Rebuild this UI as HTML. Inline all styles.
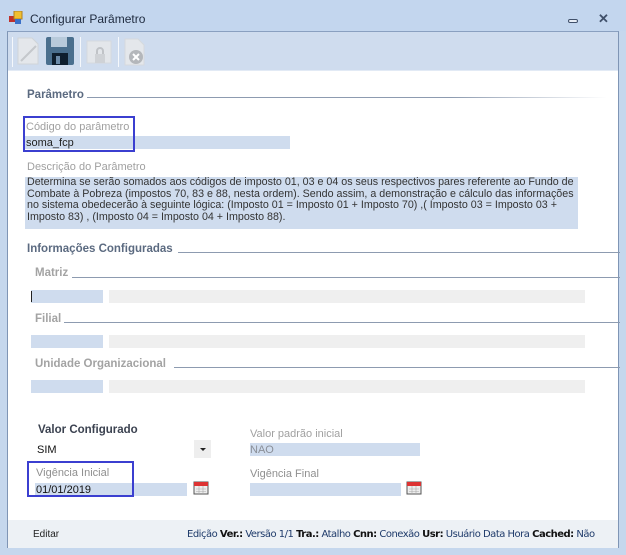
<!DOCTYPE html>
<html><head><meta charset="utf-8"><style>
*{margin:0;padding:0;box-sizing:border-box}
body{width:626px;height:555px;background:#c5d7ed;font-family:"Liberation Sans",sans-serif;font-size:11px;position:relative;overflow:hidden}
.a{position:absolute;white-space:nowrap}
.g{color:#a0a0a0}
.b{font-weight:bold;color:#5b6a80;font-size:11.5px}
.gb{font-weight:bold;color:#a3a3a3;font-size:11.5px}
.f{position:absolute;background:#cfdcee}
.e{position:absolute;background:#efefef}
.ln{position:absolute;height:1px;background:#8d9bb0}
</style></head><body>
<div class="a" style="left:0;top:0;width:626px;height:31px;background:#c3d6ee"></div>
<svg class="a" style="left:9px;top:11px" width="14" height="14"><rect x="0" y="5" width="6" height="6" fill="#c0302a"/><rect x="5" y="0" width="8" height="8" fill="#f0c030" stroke="#b08020"/><rect x="6" y="8" width="6" height="5" fill="#3a70c8"/></svg>
<div class="a" style="left:30px;top:12px;font-size:12px;color:#1e2a3e">Configurar Parâmetro</div>
<div class="a" style="left:568px;top:19px;width:10px;height:4px;border:1px solid #40506a;border-radius:2px;background:#e8eef6"></div>
<div class="a" style="left:598px;top:11px;font-size:13px;color:#40506a;font-weight:bold">✕</div>
<div class="a" style="left:7px;top:31px;width:612px;height:517px;background:#fff;border-left:1px solid #7f95b5;border-right:1px solid #7f95b5;border-top:1px solid #8aa0c0"></div>
<div class="a" style="left:8px;top:32px;width:610px;height:39px;background:#cfdcee;border-bottom:1px solid #e2eaf5"></div>
<div class="a" style="left:12px;top:37px;width:1px;height:30px;background:#f5f8fc"></div>
<div class="a" style="left:80px;top:37px;width:1px;height:30px;background:#f5f8fc"></div>
<div class="a" style="left:118px;top:37px;width:1px;height:30px;background:#f5f8fc"></div>
<svg class="a" style="left:16px;top:36px" width="24" height="30"><path d="M2 2h14l6 6v20H2z" fill="#e4e7eb" stroke="#d0d4d8"/><path d="M5 25L20 10" stroke="#c5c8cc" stroke-width="2"/></svg>
<svg class="a" style="left:45px;top:36px" width="30" height="30"><rect x="1" y="1" width="28" height="28" rx="2" fill="#4a6f8e"/><rect x="6" y="1" width="16" height="10" fill="#b8cadb"/><rect x="7" y="17" width="16" height="12" fill="#0e1e2e"/><rect x="11" y="20" width="4" height="8" fill="#6b8aa8"/></svg>
<svg class="a" style="left:86px;top:40px" width="26" height="26"><rect x="1" y="1" width="24" height="22" fill="#e3e6ea" stroke="#d6d9dd"/><path d="M11 14v-3a3 3 0 0 1 6 0v3" stroke="#c0c3c7" fill="none" stroke-width="2"/><rect x="9" y="14" width="10" height="9" fill="#cfd2d6"/></svg>
<svg class="a" style="left:123px;top:37px" width="24" height="30"><path d="M2 2h13l6 6v20H2z" fill="#e4e7eb" stroke="#d6d9dd"/><circle cx="13" cy="20" r="7" fill="#b4b7bb"/><path d="M10 17l6 6M16 17l-6 6" stroke="#fff" stroke-width="2"/></svg>

<div class="a b" style="left:27px;top:89px">Parâmetro</div>
<div class="ln" style="left:87px;top:97px;width:520px;background:linear-gradient(90deg,#8d9bb0,#8d9bb0 70%,#fff)"></div>
<div class="f" style="left:25px;top:136px;width:265px;height:13px"></div>
<div class="a g" style="left:26px;top:121px">Código do parâmetro</div>
<div class="a" style="left:26px;top:137px;color:#222">soma_fcp</div>
<div class="a" style="left:23px;top:116px;width:112px;height:36px;border:2px solid #3b3fd0"></div>
<div class="a g" style="left:27px;top:161px">Descrição do Parâmetro</div>
<div class="f" style="left:25px;top:177px;width:553px;height:52px"></div>
<div class="a" style="left:27px;top:177px;line-height:11.6px;color:#333;font-size:10.7px;white-space:normal;width:560px">Determina se serão somados aos códigos de imposto 01, 03 e 04 os seus respectivos pares referente ao Fundo de<br>Combate à Pobreza (impostos 70, 83 e 88, nesta ordem). Sendo assim, a demonstração e cálculo das informações<br>no sistema obedecerão à seguinte lógica: (Imposto 01 = Imposto 01 + Imposto 70) ,( Imposto 03 = Imposto 03 +<br>Imposto 83) , (Imposto 04 = Imposto 04 + Imposto 88).</div>

<div class="a b" style="left:27px;top:243px">Informações Configuradas</div>
<div class="ln" style="left:178px;top:252px;width:442px"></div>
<div class="a gb" style="left:35px;top:267px">Matriz</div>
<div class="ln" style="left:72px;top:277px;width:548px"></div>
<div class="f" style="left:31px;top:290px;width:72px;height:13px"></div>
<div class="a" style="left:31px;top:291px;width:1px;height:11px;background:#222"></div>
<div class="e" style="left:109px;top:290px;width:476px;height:13px"></div>
<div class="a gb" style="left:35px;top:313px">Filial</div>
<div class="ln" style="left:64px;top:322px;width:556px"></div>
<div class="f" style="left:31px;top:335px;width:72px;height:13px"></div>
<div class="e" style="left:109px;top:335px;width:476px;height:13px"></div>
<div class="a gb" style="left:35px;top:358px">Unidade Organizacional</div>
<div class="ln" style="left:174px;top:367px;width:446px"></div>
<div class="f" style="left:31px;top:380px;width:72px;height:13px"></div>
<div class="e" style="left:109px;top:380px;width:476px;height:13px"></div>

<div class="a" style="left:38px;top:424px;font-weight:bold;color:#3b4250;font-size:11.5px">Valor Configurado</div>
<div class="a" style="left:37px;top:444px;color:#111">SIM</div>
<div class="e" style="left:194px;top:440px;width:17px;height:18px;background:#eeeeee"></div>
<div class="a" style="left:200px;top:448px;width:0;height:0;border-left:3px solid transparent;border-right:3px solid transparent;border-top:3px solid #222"></div>
<div class="a g" style="left:250px;top:428px">Valor padrão inicial</div>
<div class="f" style="left:250px;top:443px;width:170px;height:13px"></div>
<div class="a g" style="left:250px;top:444px;color:#8a8f98">NAO</div>
<div class="a g" style="left:36px;top:467px;color:#8f8f8f">Vigência Inicial</div>
<div class="f" style="left:35px;top:483px;width:152px;height:13px"></div>
<div class="a" style="left:36px;top:484px;color:#111">01/01/2019</div>
<div class="a" style="left:27px;top:461px;width:107px;height:36px;border:2px solid #3b3fd0"></div>
<div class="a g" style="left:250px;top:468px;color:#8f8f8f">Vigência Final</div>
<div class="f" style="left:250px;top:483px;width:151px;height:13px"></div>
<svg class="a" style="left:193px;top:480px" width="16" height="15"><rect x="1" y="2" width="14" height="12" fill="#eee" stroke="#555"/><rect x="1" y="2" width="14" height="4" fill="#d33"/><path d="M3 9h10M3 11.5h10M6 6v8M10 6v8" stroke="#aaa" stroke-width=".6"/></svg>
<svg class="a" style="left:406px;top:480px" width="16" height="15"><rect x="1" y="2" width="14" height="12" fill="#eee" stroke="#555"/><rect x="1" y="2" width="14" height="4" fill="#d33"/><path d="M3 9h10M3 11.5h10M6 6v8M10 6v8" stroke="#aaa" stroke-width=".6"/></svg>

<div class="a" style="left:8px;top:520px;width:610px;height:28px;background:#edf1f5"></div>
<div class="a" style="left:33px;top:529px;font-size:10px;color:#222">Editar</div>
<div class="a" style="left:187px;top:529px;font-size:10px;color:#1e3a6a;font-family:'DejaVu Sans',sans-serif;letter-spacing:-0.5px">Edição <b style="color:#111">Ver.:</b> Versão 1/1 <b style="color:#111">Tra.:</b> Atalho <b style="color:#111">Cnn:</b> Conexão <b style="color:#111">Usr:</b> Usuário Data Hora <b style="color:#111">Cached:</b> Não</div>
</body></html>
